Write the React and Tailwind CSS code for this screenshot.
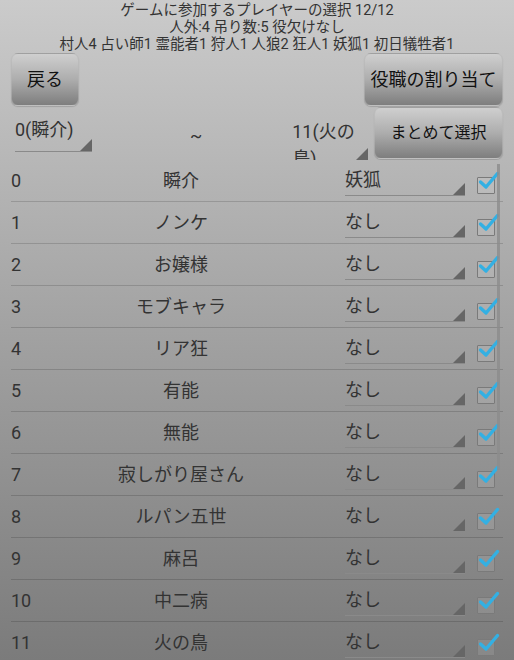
import React from "react";

const rows = [
  ["0", "瞬介", "妖狐"],
  ["1", "ノンケ", "なし"],
  ["2", "お嬢様", "なし"],
  ["3", "モブキャラ", "なし"],
  ["4", "リア狂", "なし"],
  ["5", "有能", "なし"],
  ["6", "無能", "なし"],
  ["7", "寂しがり屋さん", "なし"],
  ["8", "ルパン五世", "なし"],
  ["9", "麻呂", "なし"],
  ["10", "中二病", "なし"],
  ["11", "火の鳥", "なし"],
];

function Tri({ className }) {
  return (
    <svg className={className} width="12" height="12" viewBox="0 0 12 12">
      <polygon points="12,0 12,12 0,12" fill="#666" />
    </svg>
  );
}

function Check() {
  return (
    <div className="relative w-[18px] h-[17px] border-[1.5px] border-[#7a7a7a] rounded-[1px] bg-white/10">
      <svg className="absolute left-[-1px] top-[-8px]" width="24" height="24" viewBox="0 0 24 24">
        <path d="M3.5 12 L9 17 L20.5 3.5" fill="none" stroke="#33b0e3" strokeWidth="3.4" strokeLinecap="round" strokeLinejoin="round" />
      </svg>
    </div>
  );
}

function Btn({ children, className }) {
  return (
    <div
      className={
        "flex items-center justify-center rounded-[7px] border border-[#b5b5b5]/60 bg-gradient-to-b from-[#cfcfcf] via-[#adadad] to-[#7e7e7e] text-[#111] shadow-[0_1px_1px_rgba(0,0,0,0.15)] " +
        className
      }
    >
      {children}
    </div>
  );
}

export default function App() {
  return (
    <div
      className="relative w-[514px] h-[660px] overflow-hidden bg-gradient-to-b from-[#cbcbcb] to-[#7b7b7b] text-[#333]"
      style={{ fontFamily: 'Roboto, "Noto Sans CJK JP", sans-serif' }}
    >
      <div className="pt-[2px] h-[53px] text-center text-[14.5px] leading-[17px] text-[#333]">
        <div>ゲームに参加するプレイヤーの選択 12/12</div>
        <div>人外:4 吊り数:5 役欠けなし</div>
        <div>村人4 占い師1 霊能者1 狩人1 人狼2 狂人1 妖狐1 初日犠牲者1</div>
      </div>

      <div className="flex justify-between px-[11px] h-[54px]">
        <Btn className="w-[68px] h-[53px] text-[18px]">戻る</Btn>
        <Btn className="w-[139px] h-[53px] text-[18px]">役職の割り当て</Btn>
      </div>

      <div className="flex items-start h-[53px] overflow-hidden">
        <div className="relative ml-[15px] mt-[8px] w-[77px] h-[37px] border-b border-[#8a8a8a] text-[18px] leading-[30px]">
          0(瞬介)
          <Tri className="absolute right-0 bottom-0" />
        </div>
        <div className="ml-[98px] mt-[14px] text-[18px] leading-[30px]">~</div>
        <div className="relative ml-[90px] mt-[11px] w-[76px] h-[42px] overflow-hidden">
          <div className="w-[64px] text-[18px] leading-[27px]">11(火の 鳥)</div>
          <Tri className="absolute right-0 bottom-0" />
        </div>
        <Btn className="ml-auto mr-[11px] w-[129px] h-[52px] text-[16px]">まとめて選択</Btn>
      </div>

      <div className="relative">
        {rows.map(([i, name, role]) => (
          <div key={i} className="flex items-center h-[42px] mx-[11px] border-b border-black/15">
            <div className="w-[60px] text-[18px]">{i}</div>
            <div className="w-[220px] text-center text-[18px]">{name}</div>
            <div className="relative ml-[54px] w-[120px] h-[31px] border-b border-[#8a8a8a] text-[18px] leading-[30px]">
              {role}
              <Tri className="absolute right-0 bottom-0" />
            </div>
            <div className="ml-[12px] mt-[9px]">
              <Check />
            </div>
          </div>
        ))}
        <div className="absolute left-[497px] top-[4px] w-[3px] h-[306px] bg-[#8c8c8c]/80" />
      </div>
    </div>
  );
}
